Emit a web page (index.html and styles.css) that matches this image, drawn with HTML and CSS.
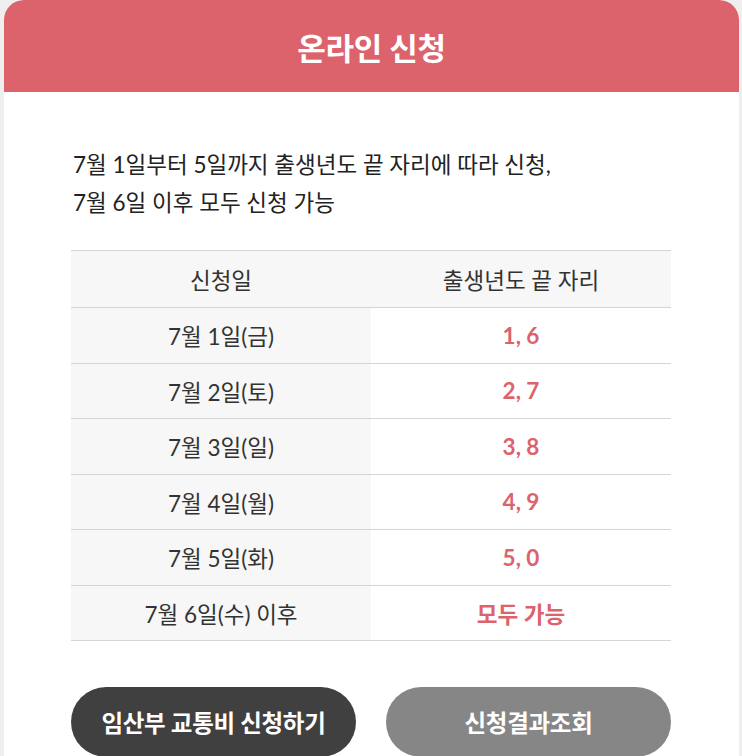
FILE: index.html
```html
<!DOCTYPE html>
<html lang="ko">
<head>
<meta charset="utf-8">
<link rel="stylesheet" href="styles.css">
</head>
<body>
<div class="card">
  <div class="card-head">온라인 신청</div>
  <div class="card-body">
    <p class="desc">7월 1일부터 5일까지 출생년도 끝 자리에 따라 신청,<br>7월 6일 이후 모두 신청 가능</p>
    <table class="sched">
      <thead>
        <tr><th>신청일</th><th>출생년도 끝 자리</th></tr>
      </thead>
      <tbody>
        <tr><td class="day">7월 1일(금)</td><td class="num">1, 6</td></tr>
        <tr><td class="day">7월 2일(토)</td><td class="num">2, 7</td></tr>
        <tr><td class="day">7월 3일(일)</td><td class="num">3, 8</td></tr>
        <tr><td class="day">7월 4일(월)</td><td class="num">4, 9</td></tr>
        <tr><td class="day">7월 5일(화)</td><td class="num">5, 0</td></tr>
        <tr><td class="day">7월 6일(수) 이후</td><td class="num">모두 가능</td></tr>
      </tbody>
    </table>
    <div class="btns">
      <a class="btn btn-dark" href="#">임산부 교통비 신청하기</a>
      <a class="btn btn-gray" href="#">신청결과조회</a>
    </div>
  </div>
</div>
</body>
</html>
```
FILE: styles.css
```css
html, body {
  margin: 0;
  padding: 0;
  background: #efefef;
}
body {
  font-family: Lato, "Noto Sans CJK KR", sans-serif;
  color: #333;
  padding: 0 3px 0 4px;
}
.card {
  background: #fff;
  border-radius: 20px 20px 0 0;
  overflow: hidden;
  min-height: 756px;
}
.card-head {
  height: 92px;
  background: #dc626b;
  color: #fff;
  font-size: 31px;
  font-weight: 700;
  display: flex;
  align-items: center;
  justify-content: center;
  letter-spacing: -0.3px;
}
.card-body {
  padding: 0 68px 0 67px;
}
.desc {
  margin: 54px 0 0 2px;
  font-size: 22.5px;
  line-height: 38px;
  color: #222;
}
.sched {
  width: 100%;
  margin-top: 28px;
  border-collapse: collapse;
  font-size: 22.5px;
}
.sched th {
  height: 56px;
  background: #f7f7f7;
  font-weight: 400;
  color: #333;
  border-top: 1px solid #d5d5d5;
  border-bottom: 1px solid #d5d5d5;
  padding: 0;
  width: 50%;
}
.sched td {
  height: 54.5px;
  padding: 0;
  text-align: center;
  border-bottom: 1px solid #d5d5d5;
  border-top: 1px solid #d5d5d5;
}
.sched tbody tr:first-child td {
  border-top: none;
}
.sched .day {
  background: #f7f7f7;
  color: #333;
}
.sched .num {
  color: #dc626b;
  font-weight: 700;
}
.btns {
  display: flex;
  justify-content: space-between;
  margin-top: 46px;
}
.btn {
  width: 285px;
  height: 70px;
  border-radius: 35px;
  display: flex;
  align-items: center;
  justify-content: center;
  color: #fff;
  text-decoration: none;
  font-size: 23.5px;
  font-weight: 700;
  letter-spacing: -0.3px;
}
.btn-dark {
  background: #404040;
}
.btn-gray {
  background: #868686;
}
```
